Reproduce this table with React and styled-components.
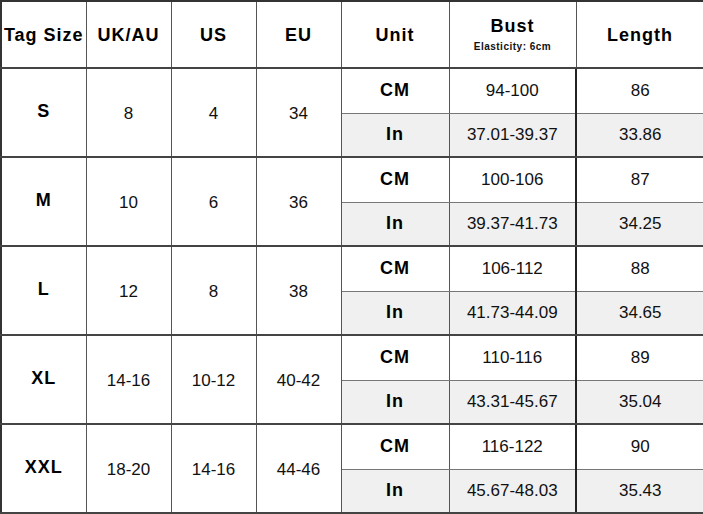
import React from "react";
import styled, { createGlobalStyle } from "styled-components";

const Global = createGlobalStyle`
  html, body { margin: 0; padding: 0; background: #fff; }
  body { font-family: "Liberation Sans", Arial, sans-serif; color: #111; }
`;

const Table = styled.table`
  width: 703px;
  table-layout: fixed;
  border-collapse: collapse;
  border-top: 2px solid #333;
  border-left: 2px solid #333;
`;

const HeadRow = styled.tr`
  height: 67px;
`;

const BodyRow = styled.tr`
  height: ${(p) => (p.$first ? "45px" : "44px")};
`;

const cellBase = `
  padding: 0;
  text-align: center;
  vertical-align: middle;
  border-right: 1px solid #555;
  border-bottom: 1px solid #666;
`;

const HeadCell = styled.th`
  ${cellBase}
  border-bottom: 2px solid #444;
  font-size: 18px;
  font-weight: 700;
  letter-spacing: 1px;
  color: #000;
  line-height: 1;
`;

const HeadNote = styled.div`
  margin-top: 7px;
  font-size: 10px;
  letter-spacing: 0.5px;
  font-weight: 700;
  color: #111;
`;

const SizeCell = styled.td`
  ${cellBase}
  border-bottom: 2px solid #444;
  font-size: 18px;
  font-weight: 700;
  letter-spacing: 1px;
  color: #000;
  padding-bottom: 2px;
`;

const SpanCell = styled.td`
  ${cellBase}
  border-bottom: 2px solid #444;
  font-size: 17px;
  color: #111;
  padding-top: 2px;
`;

const UnitCell = styled.td`
  ${cellBase}
  font-size: 18px;
  font-weight: 700;
  letter-spacing: 1px;
  color: #000;
  background: ${(p) => (p.$shade ? "#f0f0f0" : "#fff")};
  border-bottom: ${(p) => (p.$last ? "2px solid #444" : "1px solid #777")};
`;

const ValueCell = styled.td`
  ${cellBase}
  font-size: 17px;
  color: #111;
  background: ${(p) => (p.$shade ? "#f0f0f0" : "#fff")};
  border-bottom: ${(p) => (p.$last ? "2px solid #444" : "1px solid #777")};
  border-right: ${(p) => (p.$strong ? "2px solid #222" : "1px solid #555")};
`;

const rows = [
  { tag: "S", uk: "8", us: "4", eu: "34", cm: ["94-100", "86"], inch: ["37.01-39.37", "33.86"] },
  { tag: "M", uk: "10", us: "6", eu: "36", cm: ["100-106", "87"], inch: ["39.37-41.73", "34.25"] },
  { tag: "L", uk: "12", us: "8", eu: "38", cm: ["106-112", "88"], inch: ["41.73-44.09", "34.65"] },
  { tag: "XL", uk: "14-16", us: "10-12", eu: "40-42", cm: ["110-116", "89"], inch: ["43.31-45.67", "35.04"] },
  { tag: "XXL", uk: "18-20", us: "14-16", eu: "44-46", cm: ["116-122", "90"], inch: ["45.67-48.03", "35.43"] },
];

export default function App() {
  return (
    <>
      <Global />
      <Table>
        <colgroup>
          <col style={{ width: 85 }} />
          <col style={{ width: 85 }} />
          <col style={{ width: 85 }} />
          <col style={{ width: 85 }} />
          <col style={{ width: 108 }} />
          <col style={{ width: 127 }} />
          <col style={{ width: 128 }} />
        </colgroup>
        <thead>
          <HeadRow>
            <HeadCell>Tag Size</HeadCell>
            <HeadCell>UK/AU</HeadCell>
            <HeadCell>US</HeadCell>
            <HeadCell>EU</HeadCell>
            <HeadCell>Unit</HeadCell>
            <HeadCell>
              Bust
              <HeadNote>Elasticity: 6cm</HeadNote>
            </HeadCell>
            <HeadCell>Length</HeadCell>
          </HeadRow>
        </thead>
        <tbody>
          {rows.map((r) => (
            <React.Fragment key={r.tag}>
              <BodyRow $first>
                <SizeCell rowSpan={2}>{r.tag}</SizeCell>
                <SpanCell rowSpan={2}>{r.uk}</SpanCell>
                <SpanCell rowSpan={2}>{r.us}</SpanCell>
                <SpanCell rowSpan={2}>{r.eu}</SpanCell>
                <UnitCell>CM</UnitCell>
                <ValueCell $strong>{r.cm[0]}</ValueCell>
                <ValueCell>{r.cm[1]}</ValueCell>
              </BodyRow>
              <BodyRow>
                <UnitCell $shade $last>In</UnitCell>
                <ValueCell $shade $last $strong>{r.inch[0]}</ValueCell>
                <ValueCell $shade $last>{r.inch[1]}</ValueCell>
              </BodyRow>
            </React.Fragment>
          ))}
        </tbody>
      </Table>
    </>
  );
}
